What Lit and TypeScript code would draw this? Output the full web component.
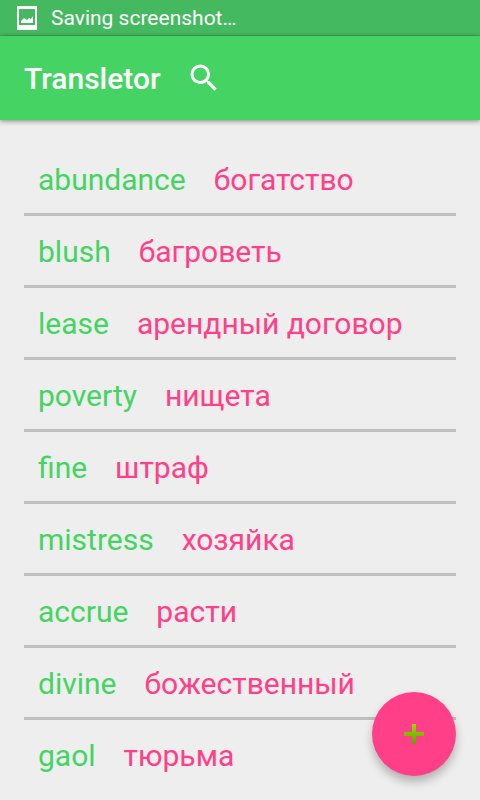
import { LitElement, html, css } from "lit";
import { customElement } from "lit/decorators.js";

interface Entry {
  word: string;
  translation: string;
}

const ENTRIES: Entry[] = [
  { word: "abundance", translation: "богатство" },
  { word: "blush", translation: "багроветь" },
  { word: "lease", translation: "арендный договор" },
  { word: "poverty", translation: "нищета" },
  { word: "fine", translation: "штраф" },
  { word: "mistress", translation: "хозяйка" },
  { word: "accrue", translation: "расти" },
  { word: "divine", translation: "божественный" },
  { word: "gaol", translation: "тюрьма" },
];

@customElement("status-bar")
class StatusBar extends LitElement {
  static styles = css`
    :host {
      display: flex;
      align-items: center;
      gap: 14px;
      box-sizing: border-box;
      height: 36px;
      padding: 0 17px;
      background: #45b960;
      box-shadow: inset 0 -1px 0 #40a859;
      color: #fff;
      font-size: 21px;
      line-height: 36px;
    }
    .icon {
      display: block;
      flex: none;
    }
  `;

  render() {
    return html`
      <svg class="icon" width="20" height="24" viewBox="0 0 20 24" aria-hidden="true">
        <path fill="#fff" fill-rule="evenodd" d="M0 0h20v24H0zM2 3v16h16V3z" />
        <path fill="#fff" d="M4 17v-2l3-3 3 2 2-2 2 1 2-3v7z" />
      </svg>
      <span>Saving screenshot…</span>
    `;
  }
}

@customElement("app-bar")
class AppBar extends LitElement {
  static styles = css`
    :host {
      display: flex;
      align-items: center;
      gap: 25px;
      box-sizing: border-box;
      height: 84px;
      padding: 0 24px;
      background: #45d463;
      box-shadow: 0 1px 5px rgba(0, 0, 0, 0.45);
      color: #fff;
    }
    .title {
      margin: 0;
      padding-top: 2px;
      font-size: 30px;
      font-weight: 500;
      line-height: 36px;
    }
    .search {
      display: block;
      padding: 0;
      border: 0;
      background: none;
      color: inherit;
      cursor: pointer;
    }
    .icon {
      display: block;
    }
  `;

  render() {
    return html`
      <h1 class="title">Transletor</h1>
      <button class="search" type="button" aria-label="Search">
        <svg class="icon" width="36" height="36" viewBox="0 0 24 24" aria-hidden="true">
          <path
            fill="currentColor"
            d="M15.5 14h-.79l-.28-.27A6.47 6.47 0 0 0 16 9.5 6.5 6.5 0 1 0 9.5 16c1.61 0 3.09-.59 4.23-1.57l.27.28v.79l5 4.99L20.49 19l-4.99-5zm-6 0a4.5 4.5 0 1 1 0-9 4.5 4.5 0 0 1 0 9z"
          />
        </svg>
      </button>
    `;
  }
}

@customElement("app-root")
class AppRoot extends LitElement {
  static styles = css`
    :host {
      display: block;
      box-sizing: border-box;
      min-height: 100vh;
      background: #eee;
      font-family: Roboto, "Noto Sans", sans-serif;
    }
    .words {
      margin: 0;
      padding: 24px 24px 0;
      list-style: none;
    }
    .row {
      display: flex;
      align-items: center;
      gap: 28px;
      min-height: 67px;
      padding: 2px 14px 0;
      font-size: 30px;
      line-height: 36px;
    }
    .row + .row {
      border-top: 3px solid #bfbfbf;
    }
    .word {
      color: #45d463;
    }
    .translation {
      color: #ff4089;
    }
    .add {
      position: fixed;
      right: 24px;
      bottom: 24px;
      display: grid;
      place-items: center;
      width: 84px;
      height: 84px;
      padding: 0;
      border: 0;
      border-radius: 50%;
      background: #ff4089;
      box-shadow: 0 6px 10px rgba(0, 0, 0, 0.25);
      cursor: pointer;
    }
  `;

  render() {
    return html`
      <status-bar></status-bar>
      <app-bar></app-bar>
      <ul class="words">
        ${ENTRIES.map(
          (entry) => html`
            <li class="row">
              <span class="word" lang="en">${entry.word}</span>
              <span class="translation" lang="ru">${entry.translation}</span>
            </li>
          `
        )}
      </ul>
      <button class="add" type="button" aria-label="Add word">
        <svg width="20" height="20" viewBox="0 0 20 20" aria-hidden="true">
          <defs>
            <linearGradient id="leaf" x1="0" y1="0" x2="0" y2="1">
              <stop offset="0" stop-color="#96dc00" />
              <stop offset="1" stop-color="#64a000" />
            </linearGradient>
          </defs>
          <path fill="url(#leaf)" d="M8 0h4v8h8v4h-8v8H8v-8H0V8h8z" />
        </svg>
      </button>
    `;
  }
}
